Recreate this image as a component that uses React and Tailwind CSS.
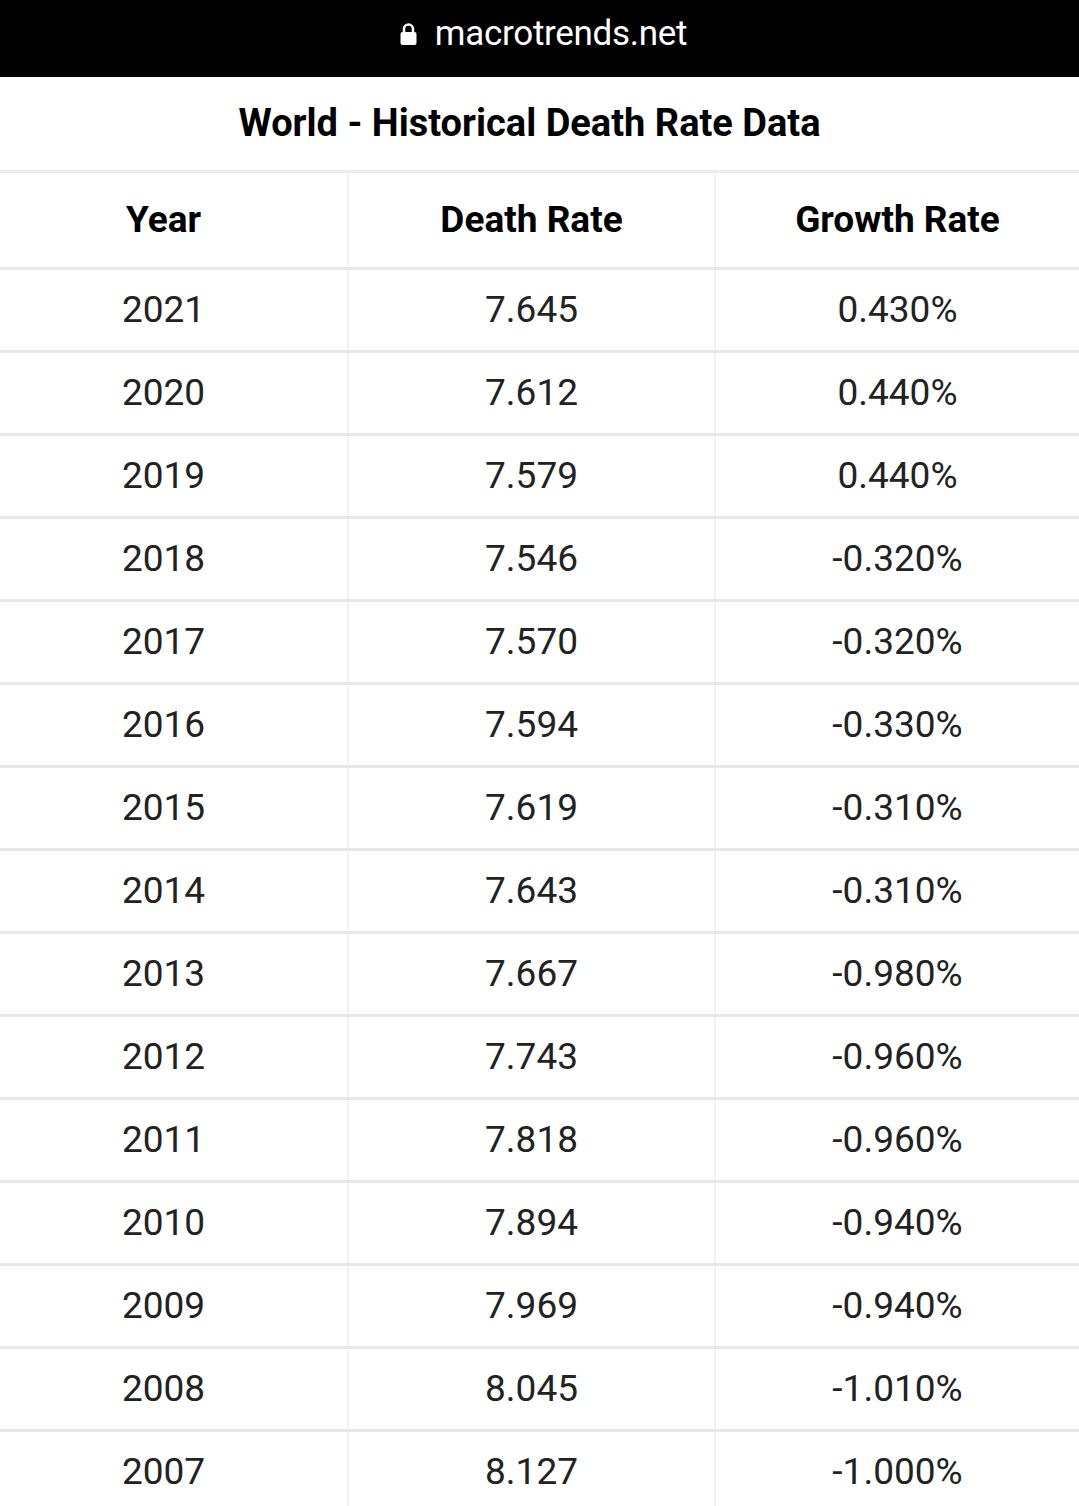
import React from "react";

const rows = [
  ["2021", "7.645", "0.430%"],
  ["2020", "7.612", "0.440%"],
  ["2019", "7.579", "0.440%"],
  ["2018", "7.546", "-0.320%"],
  ["2017", "7.570", "-0.320%"],
  ["2016", "7.594", "-0.330%"],
  ["2015", "7.619", "-0.310%"],
  ["2014", "7.643", "-0.310%"],
  ["2013", "7.667", "-0.980%"],
  ["2012", "7.743", "-0.960%"],
  ["2011", "7.818", "-0.960%"],
  ["2010", "7.894", "-0.940%"],
  ["2009", "7.969", "-0.940%"],
  ["2008", "8.045", "-1.010%"],
  ["2007", "8.127", "-1.000%"],
];

const LockIcon = () => (
  <svg width="17" height="24" viewBox="0 0 17 24" className="mr-[18px]">
    <path
      d="M4 10V7a4.5 4.5 0 0 1 9 0v3"
      fill="none"
      stroke="white"
      strokeWidth="2.6"
    />
    <rect x="0.5" y="10" width="16" height="13" rx="2" fill="white" />
  </svg>
);

export default function App() {
  return (
    <div className="w-[1079px] h-[1506px] overflow-hidden bg-white font-['Roboto',sans-serif]">
      {/* browser url bar */}
      <div className="h-[77px] bg-black flex items-center justify-center pb-[10px] pl-[8px]">
        <LockIcon />
        <span className="text-white text-[35px] leading-none tracking-[-0.3px]">
          macrotrends.net
        </span>
      </div>

      <div className="h-[93px] flex items-center justify-center pb-[2px] pr-5">
        <h1 className="text-[38px] font-bold text-black leading-none">
          World - Historical Death Rate Data
        </h1>
      </div>

      <div className="border-t-[3px] border-[#ececec]">
        <div className="grid grid-cols-[347px_367px_365px] h-[97px] border-b-[3px] border-[#e8e8e8] text-[37px] font-bold text-black">
          <div className="flex items-center justify-center pr-5">Year</div>
          <div className="flex items-center justify-center border-l-2 border-[#f2f2f2]">
            Death Rate
          </div>
          <div className="flex items-center justify-center border-l-2 border-[#f2f2f2]">
            Growth Rate
          </div>
        </div>

        {rows.map(([year, rate, growth]) => (
          <div
            key={year}
            className="grid grid-cols-[347px_367px_365px] h-[83px] border-b-[3px] border-[#e8e8e8] text-[37px] text-[#222]"
          >
            <div className="flex items-center justify-center pr-5">{year}</div>
            <div className="flex items-center justify-center border-l-2 border-[#f2f2f2]">
              {rate}
            </div>
            <div className="flex items-center justify-center border-l-2 border-[#f2f2f2]">
              {growth}
            </div>
          </div>
        ))}
      </div>
    </div>
  );
}
